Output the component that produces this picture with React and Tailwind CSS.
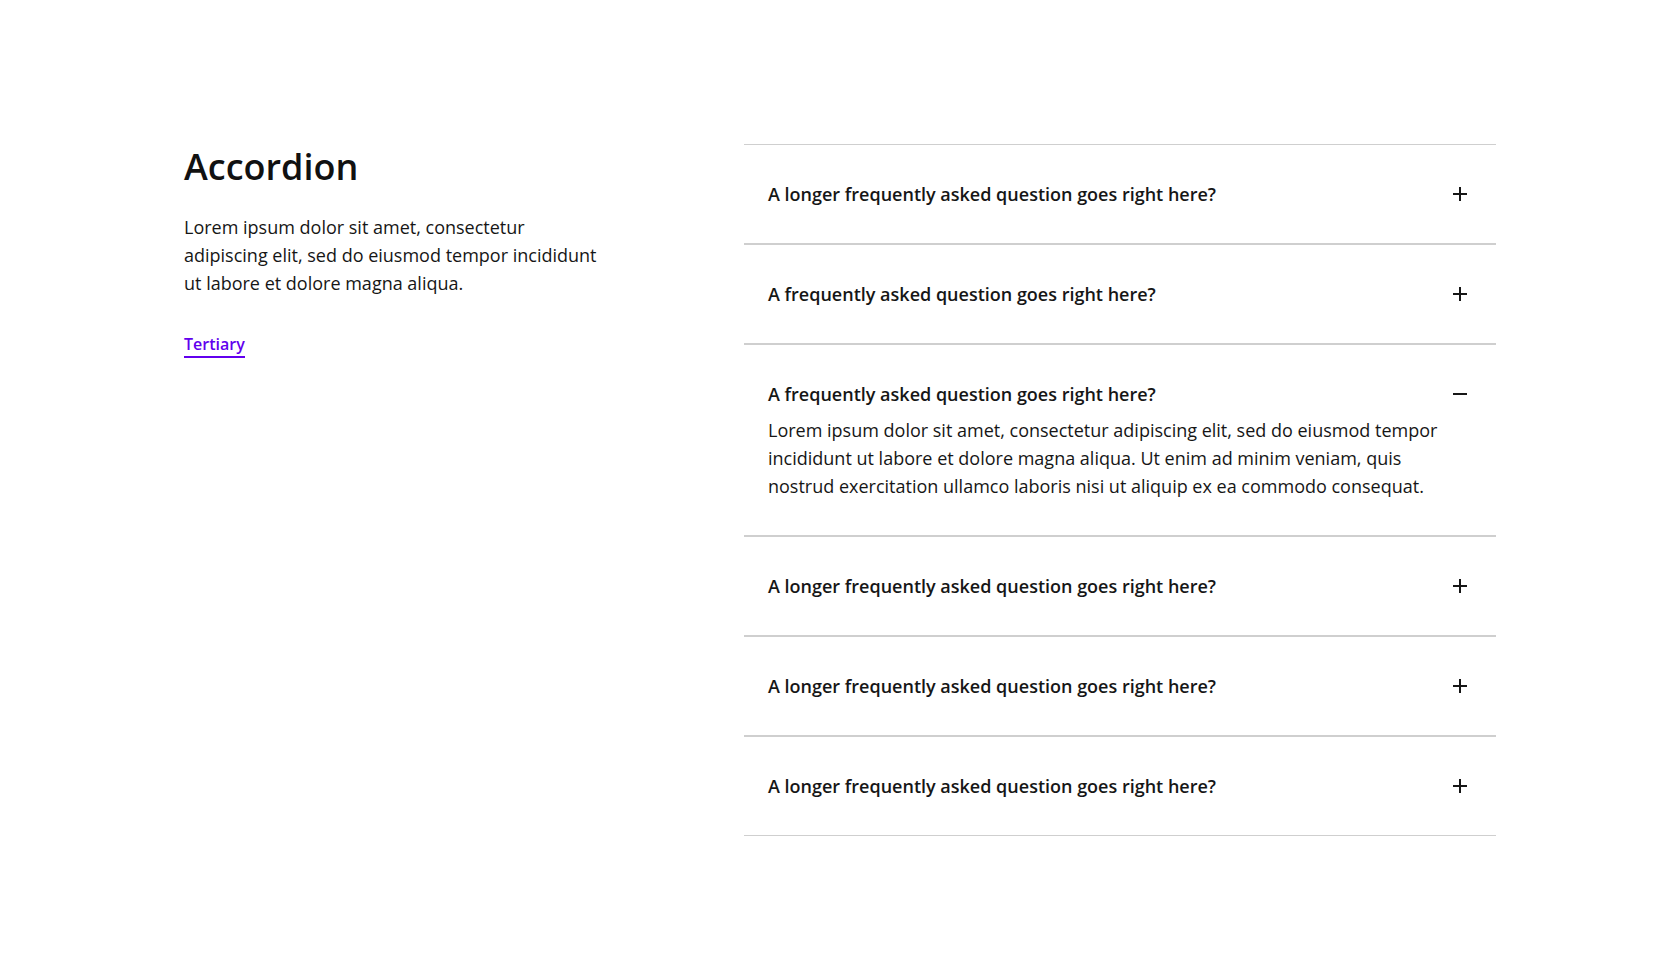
import React, { useState } from 'react'

const items = [
  { q: 'A longer frequently asked question goes right here?' },
  { q: 'A frequently asked question goes right here?' },
  { q: 'A frequently asked question goes right here?' },
  { q: 'A longer frequently asked question goes right here?' },
  { q: 'A longer frequently asked question goes right here?' },
  { q: 'A longer frequently asked question goes right here?' },
]

const answer =
  'Lorem ipsum dolor sit amet, consectetur adipiscing elit, sed do eiusmod tempor incididunt ut labore et dolore magna aliqua. Ut enim ad minim veniam, quis nostrud exercitation ullamco laboris nisi ut aliquip ex ea commodo consequat.'

const ToggleIcon = ({ open }) => (
  <svg width="24" height="24" viewBox="0 0 24 24" className="shrink-0">
    <path d="M5 12h14" stroke="#161616" strokeWidth="2" />
    {!open && <path d="M12 5v14" stroke="#161616" strokeWidth="2" />}
  </svg>
)

const App = () => {
  const [openIdx, setOpenIdx] = useState(2)

  return (
    <div className="min-h-screen bg-white text-[#161616] font-['Open_Sans',sans-serif]">
      <div className="mx-auto w-[1312px] pt-[144px] flex justify-between">
        <div className="w-[420px] pt-[1px]">
          <h1 className="text-[36px] leading-[44px] font-semibold text-[#111]">Accordion</h1>
          <p className="mt-6 text-[18px] leading-7">
            Lorem ipsum dolor sit amet, consectetur adipiscing elit, sed do eiusmod tempor incididunt ut labore et dolore magna aliqua.
          </p>
          <a
            href="#"
            className="mt-[35px] inline-block text-base leading-6 font-semibold text-[#6200ee] border-b-2 border-[#6200ee]"
          >
            Tertiary
          </a>
        </div>

        <div className="w-[752px]">
          {items.map((item, i) => {
            const open = openIdx === i
            return (
              <div key={i} className="border-y border-[#cfcfcf]">
                <button
                  type="button"
                  onClick={() => setOpenIdx(open ? -1 : i)}
                  className={`w-full flex items-center justify-between px-6 text-left ${open ? 'pt-[35px] pb-2' : 'py-[35px]'}`}
                >
                  <span className="text-[18px] leading-7 font-semibold">{item.q}</span>
                  <ToggleIcon open={open} />
                </button>
                {open && (
                  <p className="px-6 pb-[35px] text-[18px] leading-7 max-w-[738px]">{answer}</p>
                )}
              </div>
            )
          })}
        </div>
      </div>
    </div>
  )
}

export default App
